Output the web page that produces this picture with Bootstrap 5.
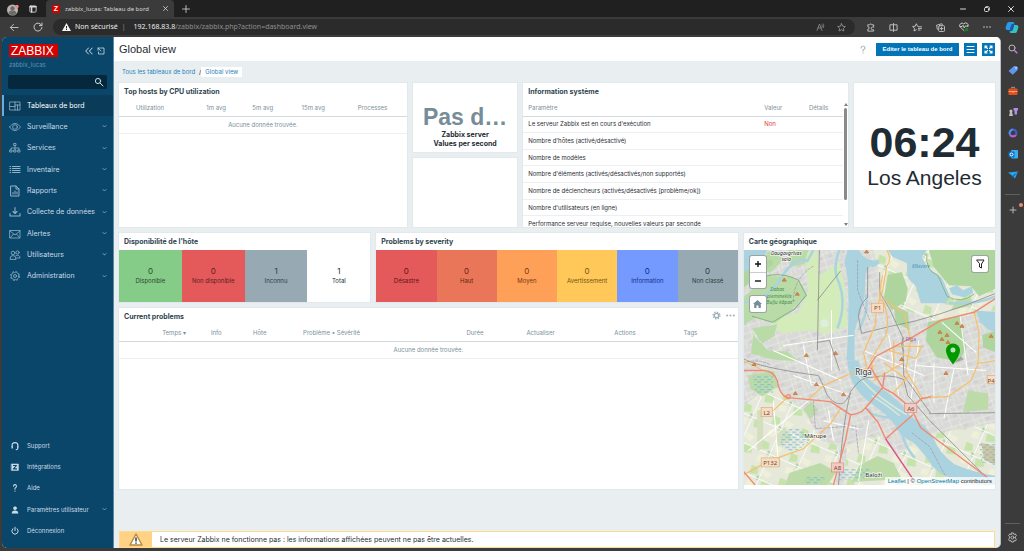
<!DOCTYPE html>
<html lang="fr">
<head>
<meta charset="utf-8">
<meta name="viewport" content="width=device-width, initial-scale=1">
<title>zabbix_lucas: Tableau de bord</title>
<link href="https://cdn.jsdelivr.net/npm/bootstrap@5.3.0/dist/css/bootstrap.min.css" rel="stylesheet">
<style>
  body { background: #3b3b3b; color: #1f2c33; font: 6px/10px Inter, "Liberation Sans", Arial, sans-serif; overflow: hidden; }
  button { font: inherit; color: inherit; background: none; border: 0; padding: 0; display: inline-flex; align-items: center; justify-content: center; }
  a { text-decoration: none; color: #1f7fb8; }
  svg { display: block; flex: none; }
  .ic { fill: none; stroke: currentColor; stroke-width: 1; stroke-linecap: round; stroke-linejoin: round; }
  .chrome-font { font-family: "Noto Sans", sans-serif; }
  .display-font { font-family: "Liberation Sans", Arial, sans-serif; }

  /* browser frame */
  .tabstrip { background: #202020; height: 17px; color: #d8d8d8; }
  .win-start { gap: 10px; padding: 0 9px 0 5px; }
  .win-end { gap: 18px; padding-right: 10px; }
  .tab-active { background: #3b3b3b; width: 128px; border-radius: 4px 4px 0 0; font-size: 6px; padding: 0 6px; gap: 5px; }
  .tab-active .tab-title { width: 86px; white-space: nowrap; }
  .fav { background: #d40000; color: #fff; width: 8px; height: 8px; font: bold 7px/8px "Liberation Sans", Arial, sans-serif; text-align: center; }
  .toolbar { height: 20px; color: #c9c9c9; }
  .nav-tools { gap: 14px; padding: 0 10px 0 9px; }
  .ext-tools { gap: 14px; padding: 0 5px 0 11px; }
  .address { background: #2b2b2b; border-radius: 8px; height: 16px; font-size: 7px; color: #8f8f8f; padding: 0 9px; }
  .address .host { color: #ececec; }
  .edge { width: 23px; flex: none; color: #b8b8b8; }
  .edge-tools { gap: 9px; padding-top: 6px; }
  .edge-tools svg { width: 12px; height: 12px; }
  .edge hr { width: 15px; margin: 0; opacity: 1; border-color: #606060; }
  .dot { position: absolute; right: -4px; top: -1px; width: 4px; height: 4px; border-radius: 50%; background: #ee8a78; }

  .app { min-width: 0; margin: 0 0 3px 2px; border-radius: 5px; overflow: hidden; background: #e9eef1; border-right: 1px solid #b9c1c6; }

  /* sidebar */
  .side { width: 112px; background: #0a466a; color: #c9dbe6; border-right: 1px solid #5f8aa3; }
  .side-top { padding: 7px 8px 0 7px; gap: 4px; }
  .logo { background: #d40000; color: #fff; font-size: 12px; line-height: 12px; padding: 1px 2px 0; height: 13px; width: 49px; }
  .side-host { color: #5f93b2; line-height: 10px; padding: 3px 7px 0; }
  .search { background: #06283d; height: 14px; border: 0; border-radius: 2px; color: #c9dbe6; font-size: 7px; padding: 0 16px 0 4px; box-shadow: none; }
  .search:focus { background: #06283d; color: #fff; }
  .search-box { margin: 5px 6px 6px; }
  .search-ic { position: absolute; right: 3px; top: 2px; }
  .menu { display: grid; grid-auto-rows: 1fr; margin: 0; padding: 0; list-style: none; font-size: 7px; }
  .menu-main { height: 192px; }
  .menu-foot { height: 107px; font-size: 6px; margin-bottom: 6px; }
  .menu a { color: inherit; display: flex; align-items: center; height: 100%; padding: 0 6px 0 5px; border-left: 2px solid transparent; white-space: nowrap; }
  .menu a.on { background: #0a3b59; border-color: #5fb0e6; color: #fff; }
  .menu .mi { width: 12px; height: 12px; margin-right: 6px; color: #8fb3c8; stroke-width: .8; }
  .menu-foot .mi { color: #c9dbe6; }
  .menu .chev { width: 5px; height: 5px; margin-left: auto; color: #8fb3c8; stroke-width: .8; }

  /* page header */
  .pagehead { background: #fff; height: 24px; padding: 0 5px; gap: 5px; }
  .pagehead h1 { font-size: 11px; line-height: 24px; margin: 0; font-weight: 400; }
  .act { background: #0275b8; color: #fff; height: 13px; }
  .act-edit { width: 83px; font-weight: bold; white-space: nowrap; }
  .act-sq { width: 13px; }
  .help { color: #a9b8c0; margin-right: 4px; }
  .crumbs { height: 22px; padding: 0 8px; }
  .crumb-on { background: #fff; padding: 0 4px; }

  /* dashboard */
  .dash { display: grid; grid-template-columns: repeat(24, minmax(0, 1fr)); grid-template-rows: 69px 69px 69px 181px; gap: 6px; padding: 0 5px; }
  .w { background: #fff; overflow: hidden; display: flex; flex-direction: column; position: relative; box-shadow: 0 0 0 1px #e2e8eb; }
  .w h2 { font-size: 7px; line-height: 17px; font-weight: bold; margin: 0; padding: 0 5px; color: #2f4450; height: 17px; flex: none; }
  .w-top { grid-area: 1 / 1 / 3 / 9; }
  .w-item { grid-area: 1 / 9 / 2 / 12; }
  .w-blank { grid-area: 2 / 9 / 3 / 12; }
  .w-info { grid-area: 1 / 12 / 3 / 21; }
  .w-clock { grid-area: 1 / 21 / 3 / 25; }
  .w-avail { grid-area: 3 / 1 / 4 / 8; }
  .w-sev { grid-area: 3 / 8 / 4 / 18; }
  .w-map { grid-area: 3 / 18 / 5 / 25; padding-bottom: 4px; }
  .w-prob { grid-area: 4 / 1 / 5 / 18; }
  .grid-t { width: 100%; table-layout: fixed; border-collapse: collapse; white-space: nowrap; }
  .grid-t th { font-weight: 400; color: #7b8f9a; height: 16px; border-bottom: 1px solid #d3dadd; padding: 0 0 0 9px; }
  .grid-t td { height: 17px; border-bottom: 1px solid #edf0f2; padding: 0 0 0 9px; }
  .grid-t td.none { text-align: center; color: #7b8f9a; padding: 0; }
  .top-t th { padding-left: 17px; }
  .info-t { height: 133px; flex: none; width: calc(100% - 5px); }
  .info-t th, .info-t td { padding-left: 5px; }
  .info-t td { height: auto; }
  .sbar { position: absolute; right: 0; top: 19px; bottom: 0; width: 5px; color: #7f7f7f; }
  .sbar i { display: block; width: 3px; height: 92px; background: #8a8a8a; border-radius: 2px; }
  .item-val { font-size: 23px; line-height: 26px; font-weight: bold; color: #768d99; }
  .item-lbl { font-size: 7px; line-height: 9px; font-weight: bold; }
  .time { font-size: 43px; line-height: 46px; font-weight: bold; color: #1f2c33; }
  .city { font-size: 21px; line-height: 26px; color: #1f2c33; }
  .cell { flex: 1 1 0; text-align: center; padding-bottom: 1px; white-space: nowrap; }
  .cell b { font-weight: 400; font-size: 8px; line-height: 10px; display: block; }
  .c-ok { background: #86cc89; color: #2b4a2d; } .c-dis { background: #e45959; color: #5e1616; }
  .c-unk { background: #97aab3; color: #2c3a42; } .c-high { background: #e97659; color: #662414; }
  .c-avg { background: #ffa059; color: #733a10; } .c-warn { background: #ffc859; color: #735610; }
  .c-inf { background: #7499ff; color: #112f8c; } .c-no { background: #e45959; color: #5b2222; }
  .off { color: #e33734; }
  .w-tools { position: absolute; right: 3px; top: 3px; color: #9fb0ba; gap: 5px; }

  /* map */
  .mapbox { flex: 1; min-height: 0; position: relative; }
  .mapbox > svg { width: 100%; height: 100%; }
  .mctl { position: absolute; background: #fff; border-radius: 2px; box-shadow: 0 0 0 1px #9ba3a5; width: 16px; color: #222; }
  .mctl button { width: 16px; height: 16px; }
  .m-zoom { left: 6px; top: 6px; } .m-home { left: 6px; top: 46px; } .m-filter { right: 7px; top: 6px; }
  .m-zoom button + button { border-top: 1px solid #ccc; }
  .attrib { position: absolute; right: 0; bottom: 0; background: rgba(255,255,255,.75); padding: 0 3px; line-height: 8px; white-space: nowrap; }
  .attrib a { color: #0078a8; }

  .warn { border: 1px solid #ffd98c; background: #fff; height: 17px; margin: 0 5px; font-size: 7px; }
  .warn-ic { background: #ffd383; width: 32px; }
</style>
</head>
<body>
<div class="d-flex flex-column vh-100">
  <header class="chrome-font">
    <div class="tabstrip d-flex align-items-center">
      <div class="win-start d-flex align-items-center">
        <button aria-label="Profil"><svg width="14" height="14" viewBox="0 0 14 14"><circle cx="7.500" cy="8" r="5.500" fill="#b9b6b2"/><circle cx="7.500" cy="6.500" r="2.200" fill="#6f6b68"/><path d="M3.500 11.500a4 3 0 0 1 8 0a5.500 5.500 0 0 1-8 0" fill="#6f6b68"/><circle cx="12" cy="4.500" r="1.700" fill="#f08b7c"/></svg></button>
        <button aria-label="Onglets"><svg class="ic" width="8" height="8" viewBox="0 0 9 9"><rect x="1" y="1" width="7" height="7" rx="1"/><path d="M1 2h7M3 3v5" stroke-width="1.500"/></svg></button>
      </div>
      <div class="tab-active d-flex align-items-center align-self-stretch">
        <span class="fav">Z</span><span class="tab-title">zabbix_lucas: Tableau de bord</span>
        <button class="ms-auto" aria-label="Fermer l'onglet"><svg class="ic" width="5" height="5" viewBox="0 0 5 5"><path d="M.5.5l4 4m0-4l-4 4" stroke-width=".8"/></svg></button>
      </div>
      <button class="ms-2" aria-label="Nouvel onglet"><svg class="ic" width="8" height="8" viewBox="0 0 8 8"><path d="M4 .5v7M.5 4h7" stroke-width=".8"/></svg></button>
      <div class="win-end ms-auto d-flex">
        <button aria-label="Réduire"><svg class="ic" width="6" height="6" viewBox="0 0 6 6"><path d="M.5 3h5"/></svg></button>
        <button aria-label="Restaurer"><svg class="ic" width="6" height="6" viewBox="0 0 6 6"><rect x=".5" y="1.500" width="4" height="4" rx="1"/><path d="M2 .5h2.500l1 1V4" stroke-width=".8"/></svg></button>
        <button aria-label="Fermer"><svg class="ic" width="6" height="6" viewBox="0 0 6 6"><path d="M.5.5l5 5m0-5l-5 5"/></svg></button>
      </div>
    </div>
    <div class="toolbar d-flex align-items-center">
      <div class="nav-tools d-flex align-items-center">
        <button aria-label="Retour"><svg class="ic" width="10" height="9" viewBox="0 0 11 9"><path d="M10 4.500H2M5 1L1.500 4.500 5 8"/></svg></button>
        <button aria-label="Actualiser"><svg class="ic" width="10" height="10" viewBox="0 0 10 10"><path d="M8.700 3.500A4 4 0 1 0 9 5.500M9 1v2.600H6.400"/></svg></button>
      </div>
      <div class="address d-flex align-items-center flex-grow-1">
        <svg width="9" height="8" viewBox="0 0 9 8"><path d="M4.500 0L9 8H0z" fill="#f2f2f2"/><path d="M4.500 3v2.500M4.500 6v1" stroke="#2b2b2b"/></svg>
        <span class="ms-1 host">Non sécurisé</span>
        <span class="mx-1">|</span>
        <span class="text-nowrap ps-1"><span class="host">192.168.83.8</span>/zabbix/zabbix.php?action=dashboard.view</span>
        <button class="ms-auto me-2" aria-label="Lecture à voix haute"><svg class="ic" width="9" height="8" viewBox="0 0 9 8"><path d="M1 7.500L3.500 1 6 7.500M2 5h3M6 2q1 .7 0 2M7 .8q1.800 1.700.3 4" stroke-width=".8"/></svg></button>
        <button class="ms-1" aria-label="Favori"><svg class="ic" width="9" height="9" viewBox="0 0 10 10"><path d="M5 .8l1.300 2.700 3 .4-2.200 2 .6 3L5 7.500 2.300 8.900l.6-3-2.200-2 3-.4z"/></svg></button>
      </div>
      <div class="ext-tools d-flex align-items-center">
        <button aria-label="Extensions"><svg class="ic" width="9" height="9" viewBox="0 0 10 10"><path d="M8.500 3.500V2h-2a1.300 1.300 0 0 0-2.500 0H2v2a1.300 1.300 0 1 1 0 3v2h6.500V7.500H7.300a1.300 1.300 0 1 1 0-3h1.200z"/></svg></button>
        <button aria-label="Écran partagé"><svg class="ic" width="9" height="9" viewBox="0 0 10 10"><path d="M4 2H1v6h3M6 2h3v6H6M5 .5v9"/></svg></button>
        <button aria-label="Favoris"><svg class="ic" width="10" height="9" viewBox="0 0 11 10"><path d="M6 3.500L4.800.8 3.600 3.500l-3 .4 2.200 2-.6 3L4.800 7.500M7 4.200h3.500M7 6h3.500M7 7.800h2"/></svg></button>
        <button aria-label="Collections"><svg class="ic" width="9" height="9" viewBox="0 0 10 10"><rect x="3" y="3" width="6.500" height="6.500" rx="1"/><path d="M1.500 7L.6 2.500 6.500.8l.5 1M6.200 4.700v3M4.700 6.200h3"/></svg></button>
        <button aria-label="Performances"><svg class="ic" width="10" height="10" viewBox="0 0 10 10"><path d="M5 8.500L1.200 5a2.200 2.200 0 0 1 3.600-3 2.200 2.200 0 0 1 4 2.500M1 4.500h2l1-1.200 1.200 2.500L6.300 4H9"/><circle cx="7.500" cy="7.500" r="1.800" fill="#14801e" stroke="none"/></svg></button>
        <button aria-label="Plus"><svg width="8" height="2" viewBox="0 0 8 2" fill="currentColor"><circle cx="1" cy="1" r=".8"/><circle cx="4" cy="1" r=".8"/><circle cx="7" cy="1" r=".8"/></svg></button>
        <button aria-label="Copilot"><svg width="14" height="13" viewBox="0 0 14 13"><path d="M4 1h4q1 0 1.500 1.500L8 3Q6.500 3 6 5L5 9H2.500Q0 9 .8 6L2 2.500Q2.500 1 4 1z" fill="#2a9be8"/><path d="M10 12H6q-1 0-1.500-1.500L6 10q1.500 0 2-2l1-4h2.500q2.500 0 1.700 3L12 10.500q-.5 1.500-2 1.500z" fill="#35c3c0"/><path d="M5 9l1-4q.5-2 2-2l1.500-.5.8 1.500H9L8 8q-.5 2-2 2l-1.500.5L3.800 9z" fill="#1c56b0"/></svg></button>
      </div>
    </div>
  </header>

  <div class="d-flex flex-grow-1" style="min-height:0">
    <div class="app d-flex flex-grow-1">
      <nav class="side d-flex flex-column flex-shrink-0" aria-label="Menu principal">
        <div class="side-top d-flex align-items-center">
          <span class="logo display-font">ZABBIX</span>
          <button class="ms-auto" aria-label="Réduire le menu"><svg class="ic" width="8" height="8" viewBox="0 0 8 8"><path d="M3.500 1L.7 4l2.800 3M7.200 1L4.400 4l2.800 3"/></svg></button>
          <button aria-label="Masquer le menu"><svg class="ic" width="8" height="8" viewBox="0 0 8 8"><path d="M4 1h3v6H1.500V5M1 3.200V1h2M1 1l3 3" stroke-width=".8"/></svg></button>
        </div>
        <div class="side-host">zabbix_lucas</div>
        <form class="search-box position-relative" role="search" onsubmit="return false">
          <input class="search form-control" type="text" aria-label="Rechercher">
          <svg class="ic search-ic" width="10" height="10" viewBox="0 0 10 10"><circle cx="4" cy="4" r="2.600"/><path d="M6 6l3 3"/></svg>
        </form>
        <ul class="menu menu-main">
          <li><a class="on" href="#"><svg class="ic mi" viewBox="0 0 12 12"><path d="M1 2h10v8H1zM6 2v8M1 6.500h5M6 5h5M8.500 5v5"/></svg>Tableaux de bord</a></li>
          <li><a href="#"><svg class="ic mi" viewBox="0 0 12 12"><path d="M.5 6Q6-1.500 11.500 6 6 13.500.5 6z"/><circle cx="6" cy="6" r="2.300"/></svg>Surveillance<svg class="ic chev" viewBox="0 0 5 5"><path d="M1 1.500l1.500 1.500L4 1.500"/></svg></a></li>
          <li><a href="#"><svg class="ic mi" viewBox="0 0 12 12"><path d="M5 1.500h2v2H5zM1 8h2v2H1zM5 8h2v2H5zM9 8h2v2H9zM6 3.500V8M2 8V6h8v2"/></svg>Services<svg class="ic chev" viewBox="0 0 5 5"><path d="M1 1.500l1.500 1.500L4 1.500"/></svg></a></li>
          <li><a href="#"><svg class="ic mi" viewBox="0 0 12 12"><path d="M3.500 2.500H11M3.500 4.500H11M3.500 6.500H11M3.500 8.500H11M1 2.500h.6M1 4.500h.6M1 6.500h.6M1 8.500h.6" stroke-width="1.200"/></svg>Inventaire<svg class="ic chev" viewBox="0 0 5 5"><path d="M1 1.500l1.500 1.500L4 1.500"/></svg></a></li>
          <li><a href="#"><svg class="ic mi" viewBox="0 0 12 12"><path d="M2 1h5l3 3v7H2zM7 1v3h3M4 9V7.500M6 9V6M8 9V7" stroke-width="1"/></svg>Rapports<svg class="ic chev" viewBox="0 0 5 5"><path d="M1 1.500l1.500 1.500L4 1.500"/></svg></a></li>
          <li><a href="#"><svg class="ic mi" viewBox="0 0 12 12"><path d="M1 7.500V10h10V7.500M6 1.500v6M4 5.500l2 2 2-2" stroke-width="1.100"/></svg>Collecte de données<svg class="ic chev" viewBox="0 0 5 5"><path d="M1 1.500l1.500 1.500L4 1.500"/></svg></a></li>
          <li><a href="#"><svg class="ic mi" viewBox="0 0 12 12"><path d="M1 2.500h10v7.500H1zM1 3l5 4 5-4M1.500 9.500L4.500 6M10.500 9.500l-3-3.500"/></svg>Alertes<svg class="ic chev" viewBox="0 0 5 5"><path d="M1 1.500l1.500 1.500L4 1.500"/></svg></a></li>
          <li><a href="#"><svg class="ic mi" viewBox="0 0 12 12"><circle cx="4" cy="4" r="1.800"/><circle cx="8.500" cy="3.500" r="1.600"/><path d="M1 10q0-3.500 3-3.500T7 10zM7 6.500q3.500-1.500 4 2.500H7.500"/></svg>Utilisateurs<svg class="ic chev" viewBox="0 0 5 5"><path d="M1 1.500l1.500 1.500L4 1.500"/></svg></a></li>
          <li><a href="#"><svg class="ic mi" viewBox="0 0 12 12"><circle cx="6" cy="6" r="4.500" stroke-dasharray="2 1.530" stroke-linecap="butt"/><circle cx="6" cy="6" r="3.700" stroke-width=".6"/><circle cx="6" cy="6" r="1.500"/></svg>Administration<svg class="ic chev" viewBox="0 0 5 5"><path d="M1 1.500l1.500 1.500L4 1.500"/></svg></a></li>
        </ul>
        <ul class="menu menu-foot mt-auto">
          <li><a href="#"><svg class="ic mi" viewBox="-2 -2 16 16"><path d="M2 8.500V5.500a4 4 0 0 1 8 0v3q0 2-2.500 2.500M2.500 5.500v3M9.500 5.500v3" stroke-width="1.400"/></svg>Support</a></li>
          <li><a href="#"><svg class="ic mi" viewBox="-2 -2 16 16"><rect x="1.500" y="2" width="9" height="8.500" fill="currentColor"/><path d="M4 4h4L4 8.500h4" stroke="#0a466a" stroke-width="1.500"/></svg>Intégrations</a></li>
          <li><a href="#"><svg class="ic mi" viewBox="-2 -2 16 16"><path d="M4 3.500Q4.300 1.500 6 1.500T8 3.700Q8 5 6 6.200v1.300M6 10v.3" stroke-width="1.400"/></svg>Aide</a></li>
          <li><a href="#"><svg class="ic mi" viewBox="-2 -2 16 16"><g fill="currentColor"><circle cx="6" cy="3.500" r="2"/><path d="M2 10q0-3 4-3t4 3z"/></g></svg>Paramètres utilisateur<svg class="ic chev" viewBox="0 0 5 5"><path d="M1 1.500l1.500 1.500L4 1.500"/></svg></a></li>
          <li><a href="#"><svg class="ic mi" viewBox="-2 -2 16 16"><path d="M3 3a4.200 4.200 0 1 0 6 0M6 1v4.500" stroke-width="1.300"/></svg>Déconnexion</a></li>
        </ul>
      </nav>

      <main class="d-flex flex-column flex-grow-1" style="min-width:0">
        <div class="pagehead d-flex align-items-center">
          <h1 class="display-font">Global view</h1>
          <button class="help ms-auto" aria-label="Aide"><svg class="ic" width="8" height="9" viewBox="0 0 8 9"><path d="M2 3Q2.200 1 4 1t2 2Q6 4 4 5v1.200M4 8v.2" stroke-width="1.200"/></svg></button>
          <button class="act act-edit display-font">Editer le tableau de bord</button>
          <button class="act act-sq" aria-label="Actions"><svg class="ic" width="9" height="9" viewBox="0 0 9 9"><path d="M1 1.500h7M1 4.500h7M1 7.500h7"/></svg></button>
          <button class="act act-sq" aria-label="Plein écran"><svg class="ic" width="9" height="9" viewBox="0 0 9 9"><path d="M1 3V1h2M6 1h2v2M8 6v2H6M3 8H1V6M1 1l2.500 2.500M8 1L5.500 3.500M8 8L5.500 5.500M1 8l2.500-2.500" stroke-width="1.100"/></svg></button>
        </div>
        <div class="crumbs d-flex align-items-center">
          <a href="#">Tous les tableaux de bord</a><span class="ms-1">/</span><a class="crumb-on" href="#">Global view</a>
        </div>

        <div class="dash">
          <section class="w w-top">
            <h2>Top hosts by CPU utilization</h2>
            <table class="grid-t top-t">
              <colgroup><col style="width:24.400%"><col style="width:16%"><col style="width:17.100%"><col style="width:19.500%"><col style="width:23%"></colgroup>
              <thead><tr><th>Utilization</th><th>1m avg</th><th>5m avg</th><th>15m avg</th><th>Processes</th></tr></thead>
              <tbody><tr><td class="none" colspan="5">Aucune donnée trouvée.</td></tr></tbody>
            </table>
          </section>

          <section class="w w-item text-center justify-content-end pb-1">
            <div class="item-val display-font">Pas d…</div>
            <div class="item-lbl">Zabbix server<br>Values per second</div>
          </section>
          <section class="w w-blank"></section>

          <section class="w w-info">
            <h2>Information système</h2>
            <table class="grid-t info-t">
              <colgroup><col style="width:73.800%"><col style="width:14%"><col style="width:12.200%"></colgroup>
              <thead><tr><th>Paramètre</th><th>Valeur</th><th>Détails</th></tr></thead>
              <tbody>
                <tr><td>Le serveur Zabbix est en cours d'exécution</td><td class="off">Non</td><td></td></tr>
                <tr><td>Nombre d'hôtes (activé/désactivé)</td><td></td><td></td></tr>
                <tr><td>Nombre de modèles</td><td></td><td></td></tr>
                <tr><td>Nombre d'éléments (activés/désactivés/non supportés)</td><td></td><td></td></tr>
                <tr><td>Nombre de déclencheurs (activés/désactivés [problème/ok])</td><td></td><td></td></tr>
                <tr><td>Nombre d'utilisateurs (en ligne)</td><td></td><td></td></tr>
                <tr><td>Performance serveur requise, nouvelles valeurs par seconde</td><td></td><td></td></tr>
              </tbody>
            </table>
            <div class="sbar d-flex flex-column align-items-center">
              <svg width="4" height="6" viewBox="0 0 4 6"><path d="M2 1l2 3H0z" fill="currentColor"/></svg><i></i>
              <svg class="mt-auto" width="4" height="6" viewBox="0 0 4 6"><path d="M2 5L0 2h4z" fill="currentColor"/></svg>
            </div>
          </section>

          <section class="w w-clock display-font text-center justify-content-center">
            <div class="time">06:24</div><div class="city">Los Angeles</div>
          </section>

          <section class="w w-avail">
            <h2>Disponibilité de l'hôte</h2>
            <div class="d-flex flex-grow-1">
              <div class="cell c-ok d-flex flex-column justify-content-center"><b>0</b>Disponible</div>
              <div class="cell c-no d-flex flex-column justify-content-center"><b>0</b>Non disponible</div>
              <div class="cell c-unk d-flex flex-column justify-content-center"><b>1</b>Inconnu</div>
              <div class="cell d-flex flex-column justify-content-center"><b>1</b>Total</div>
            </div>
          </section>

          <section class="w w-sev">
            <h2>Problems by severity</h2>
            <div class="d-flex flex-grow-1">
              <div class="cell c-dis d-flex flex-column justify-content-center"><b>0</b>Désastre</div>
              <div class="cell c-high d-flex flex-column justify-content-center"><b>0</b>Haut</div>
              <div class="cell c-avg d-flex flex-column justify-content-center"><b>0</b>Moyen</div>
              <div class="cell c-warn d-flex flex-column justify-content-center"><b>0</b>Avertissement</div>
              <div class="cell c-inf d-flex flex-column justify-content-center"><b>0</b>Information</div>
              <div class="cell c-unk d-flex flex-column justify-content-center"><b>0</b>Non classé</div>
            </div>
          </section>

          <section class="w w-map">
            <h2>Carte géographique</h2>
            <div class="mapbox">
              <svg viewBox="0 0 252 234" preserveAspectRatio="xMidYMid slice" role="img" aria-label="Rīga">
                <defs>
                  <pattern id="streets" width="23" height="19" patternUnits="userSpaceOnUse" patternTransform="rotate(-18)">
                    <path d="M0 4h23M0 11l10-2 13 2M5 0v19M14 0l2 19M9 4v7M20 11v8M0 16h14" stroke="#fff" stroke-width=".6" fill="none" opacity=".55"/>
                    <path d="M6 5h3v3H6zM16 13h3v2h-3z" fill="#d3e6c5"/><path d="M10 12h3v3h-3zM17 5h4v3h-4zM1 12h3v3H1z" fill="#cfccca" opacity=".6"/>
                  </pattern>
                  <pattern id="fields" width="31" height="27" patternUnits="userSpaceOnUse" patternTransform="rotate(24)">
                    <path d="M2 3h7l2 6-8 3zM17 14l8-2 3 7-9 3z" fill="#c5e3ab"/><path d="M15 2l9 1-2 6-6-1zM3 18l7-2 1 7-7 1z" fill="#eef0d8"/><path d="M11 10l4 1-1 4-3-1z" fill="#acd19d"/><path d="M0 13h31M14 0v27" stroke="#fff" stroke-width=".8"/>
                  </pattern>
                  <pattern id="marsh" width="7" height="5" patternUnits="userSpaceOnUse"><path d="M0 1.500h4M3 4h4" stroke="#69b1db" stroke-width=".8"/></pattern>
                </defs>
                <rect width="252" height="234" fill="#d9d9d7"/>
                <rect width="252" height="234" fill="url(#streets)"/>
                <path d="M0 155L30 135 60 160 78 190 96 195 92 234H0zM100 234l4-40 30-10 20 20 30-20 68-12v62zM130 0h122v60l-60 12-50-20z" fill="#e6e8da"/>
                <path d="M0 155L30 135 60 160 78 190 96 195 92 234H0zM100 234l4-40 30-10 20 20 30-20 68-12v62zM130 0h122v60l-60 12-50-20z" fill="url(#fields)"/>
                <path d="M62 2h13v24L96 12l5 24 3 40-22 8-12-4-33 3-7-13 25-8 10-20z" fill="#d3ecba"/>
                <circle cx="81" cy="73" r="4" fill="#dfeee0"/>
                <path d="M0 47l24-21 24 1 11 8 3 10-13 14-17 14-19-6-13 8zM24 2h12l3 9-12 12-8-3zM45 0h20l-4 14-14 3zM9 78l25-4-3 12-12 7zM10 85l15 15 19 1 12 10-26-2-22-6z" fill="#b9dba8"/>
                <path d="M0 20l28-11 2 5L0 38zM0 63l14-5M144 25l14-3 6 16-2 13-14 9-8-12zM185 0h67v38l-17 8-8-10-22-1-15-18zM150 55l14 7 2 18-14-8zM184 72l32-7 6 33-7 13-22-4-11-17zM238 85l14-5v22l-13-5z" fill="#afd59f"/>
                <path d="M134 205l16 7 8 16-50 3 8-17zM46 222l31-10 16 9-9 13H42zM224 140l20 3v16l-25 2zM212 50l16-2-3 8-18 4zM60 158l8-7 7 8-8 10zM5 125l26-5 4 16-16 10-12-8z" fill="#bcdba9"/>
                <path d="M14 160l6-2v40l-6 2zM32 185l10-9 4 13-11 7z" fill="#d5dfbf"/>
                <path d="M40 182q14-10 22 2 2 14-12 16-18 0-10-18zM10 125h20v18H12zM235 193h17v22l-15-4zM96 218h30l-6 9-25 2zM64 226h20l-8 7H60z" fill="url(#marsh)"/>
                <path d="M237 192l15 4v18l-12-5z" fill="#b4a875" opacity=".5"/>
                <!-- water -->
                <g fill="#aad3df">
                  <path d="M144 0h39l-5 7 6 11 14 10 8 18-4 7h-25l-5-17-8-8-1-15-14-6z"/>
                  <path d="M205 38l8-3 6 5 9-4 1 7-9 4-12-3z"/>
                  <path d="M232 60l20 2v20l-8-3-8-7z"/>
                  <path d="M0 0h24l-6 14-18 8z"/>
                  <path d="M104 0h11q5 8 9 9 8 3 10 0l2 4q-6 6-9 3-4 2-5 10l-1 20q-3 15-10 34v30h-8q2-28 2-60 0-25-4-38z"/>
                  <path d="M104 110h11q2 14 15 23 28 17 36 32 17 10 23 21 6 16 21 27 18 8 42 12v9q-48-2-62-17-12-17-20-25-15-7-19-18-6-9-27-24-19-15-20-40z"/>
                </g>
                <path d="M0 52q25-2 38-24T64 11l6-11M96 0q-8 18 0 34 7 20-2 44M122 44q4 16-7 36M125 158q0 8 26 9M157 165q-2 24 14 42M205 53q28 2 47-7" fill="none" stroke="#aad3df" stroke-width="2.500"/>
                <path d="M112 121q15 22 51 43M128 145q15 9 28 20" fill="none" stroke="#dbe8d8" stroke-width="1.500"/>
                <path d="M183 3q-2 18 11 22 5 12 9 21 14 8 27-2" fill="none" stroke="#7aae77" stroke-width=".8"/>
                <path d="M23 26q16-4 32 4l8 15-12 14-22 13-20-6" fill="none" stroke="#7fb87b"/>
                <path d="M0 112q18-4 28 3M70 150l2 28 40-3 3 28M168 182l18 14 16 30M114 10v30l12 30M70 16q-20 12-20 36" fill="none" stroke="#a394ad" stroke-width=".7" stroke-dasharray="3 1"/>
                <!-- local streets -->
                <path d="M40 95l70-10M30 100l68 30M88 60v60M60 95l8 40M50 125l58 20M120 100l60 25M145 85l10 60M175 90l-8 60M172 115l70 5M190 112v40M210 118l-10 50M115 178l-35-8M85 160l5 30M125 170l-10 60M198 72l34 30M216 65l8 60M30 150l5 60M5 200l60-50" fill="none" stroke="#fff" stroke-width="1"/>
                <!-- railways -->
                <path d="M76 0l-2 100M74 50L97 21M0 108q15 9 75 17 5 10 9 20 7 9 13 8 6 0 10-12 11-16 20-14 20-4 33 2l4 16 23 26 60 60M124 17v30q-9 8-9 20l3 16 29-7q45-8 105-33M136 22v20l10 17 13 28 1 38M160 87q-4 8 0 14M185 163l67-1M160 125l27 38M74 92l12-2 10 30M107 142q-8 30-12 92" fill="none" stroke="#8b8b8b" stroke-width=".8"/>
                <!-- secondary roads -->
                <path d="M143 0q6 10 0 16l-4 24q-8 20-7 34l-12 28 3 15M139 48l21 15 7 27-5 30M139 25q-6 28 0 25 8 20 3 35l-15 25 5 20M230 62l5 20-1 31-7 17-23 16-25 1M30 160l15-14M0 224l26-14 34-12 27-25 10-15M64 150l16-15 27-12 25-8M162 120l16 27M234 113l18-3M145 100l27 8 6-12H150M150 90v30M130 130l30-18M0 110l20 10M140 112l24 18M150 142l16-18" fill="none" stroke="#f7bf6b" stroke-width="1.200"/>
                <!-- main roads -->
                <path d="M0 120h20q10 0 14 10 3 16 11 17l42 4 20 13q10 0 15-7l17-20 11 6 17 14 10 20 67 50M122 157l12 14 8 17M142 188l27-24M107 164l-5 25-12 45M122 122l10-16 38-20 27-16 33-8 22-14M127 117l12 20 2-15M179 148l8-2M0 220l12 14M167 157l12-10" fill="none" stroke="#f08a70" stroke-width="1.400"/>
                <path d="M142 188l27 40" fill="none" stroke="#dc4f7c" stroke-width="1.400"/>
                <circle cx="45" cy="146" r="2" fill="none" stroke="#f08a70" stroke-width="1.400"/>
                <path d="M123 0l2 3h-4zM41 28l2 3h-4zM54 42l2 3h-4zM63 103l2 3h-4zM92 101l2 3h-4zM11 112l2 3h-4zM73 132l2 3h-4zM52 141l2 3h-4zM100 142l2 3h-4zM158 107l2 3h-4zM213 71l2 3h-4zM218 74l2 3h-4zM196 80l2 3h-4zM203 83l2 3h-4zM198 87l2 3h-4zM204 90l2 3h-4zM247 84l2 3h-4zM202 121l2 3h-4z" fill="#d08f55" stroke="#c77438" stroke-width=".8"/>
                <!-- road shields -->
                <g stroke="#dba57a" stroke-width=".6" fill="#f8dcbf"><rect x="128" y="53" width="12" height="9"/><rect x="18" y="157" width="11" height="9"/><rect x="18" y="207" width="18" height="9"/><rect x="243" y="125" width="9" height="8"/></g>
                <g stroke="#d9857a" stroke-width=".6" fill="#f5cbc1"><rect x="161" y="153" width="12" height="9"/><rect x="88" y="212" width="12" height="9"/></g>
                <g font-family="Noto Sans, sans-serif" font-size="6" text-anchor="middle" fill="#6b4634"><text x="134" y="60">P1</text><text x="23.500" y="164">L2</text><text x="27" y="214">P132</text><text x="247" y="132">P4</text><text x="167" y="160">A6</text><text x="94" y="219">A8</text></g>
                <g font-family="Noto Sans, sans-serif" text-anchor="middle" fill="#333" stroke="#fff" stroke-width="1.500" paint-order="stroke" stroke-opacity=".7">
                  <text x="120" y="124" font-size="8">Rīga</text><text x="72" y="187" font-size="6">Mārupe</text><text x="130" y="226" font-size="6">Baloži</text>
                  <g font-size="5" font-style="italic"><text x="43" y="5">Daugavgrīvas</text><text x="43" y="11">sala</text></g>
                </g>
                <g font-family="Noto Sans, sans-serif" font-size="5" font-style="italic" text-anchor="middle" fill="#42904b"><text x="34" y="41">Dabas</text><text x="36" y="48">piemineklis</text><text x="36" y="54">“Buļļu kāpas”</text></g>
                <text x="177" y="18" font-family="Noto Sans, sans-serif" font-size="5" font-style="italic" text-anchor="middle" fill="#5590b8">Ķīšezers</text>
                <text x="167" y="91" font-family="Noto Sans, sans-serif" font-size="5" text-anchor="middle" fill="#95609b">Rīga</text>
                <!-- host marker -->
                <path d="M209 113l8-7 3 3z" fill="#555" opacity=".35"/>
                <path d="M209 114q-7-9-7-14a7 7 0 0 1 14 0q0 5-7 14z" fill="#009900"/><circle cx="209" cy="99.500" r="2.500" fill="#b9e2b9"/>
              </svg>
              <div class="mctl m-zoom d-flex flex-column">
                <button aria-label="Zoom avant"><svg width="8" height="8" viewBox="0 0 8 8"><path d="M4 1v6M1 4h6" stroke="#111" stroke-width="1.400"/></svg></button>
                <button aria-label="Zoom arrière"><svg width="8" height="8" viewBox="0 0 8 8"><path d="M1 4h6" stroke="#111" stroke-width="1.400"/></svg></button>
              </div>
              <div class="mctl m-home"><button aria-label="Vue initiale"><svg width="9" height="8" viewBox="0 0 9 8"><path d="M4.500 0L9 4H7.800v4H5.500V5.500h-2V8H1.200V4H0z" fill="#768d99"/></svg></button></div>
              <div class="mctl m-filter"><button aria-label="Filtre"><svg class="ic" width="9" height="10" viewBox="0 0 9 10"><path d="M1 1h7L5.500 5v4l-2-1V5z"/></svg></button></div>
              <div class="attrib display-font"><a href="#">Leaflet</a> | © <a href="#">OpenStreetMap</a> contributors</div>
            </div>
          </section>

          <section class="w w-prob">
            <h2>Current problems</h2>
            <div class="w-tools d-flex align-items-center">
              <button aria-label="Modifier"><svg class="ic" width="9" height="9" viewBox="0 0 9 9"><circle cx="4.500" cy="4.500" r="3.300" stroke-width="1.600" stroke-dasharray="1.300 1.292" stroke-linecap="butt"/><circle cx="4.500" cy="4.500" r="2.200" stroke-width="1.300"/></svg></button>
              <button aria-label="Actions"><svg width="9" height="3" viewBox="0 0 9 3" fill="currentColor"><circle cx="1.200" cy="1.500" r="1"/><circle cx="4.500" cy="1.500" r="1"/><circle cx="7.800" cy="1.500" r="1"/></svg></button>
            </div>
            <table class="grid-t">
              <colgroup><col style="width:13.400%"><col style="width:6.800%"><col style="width:8.100%"><col style="width:26.400%"><col style="width:9.700%"><col style="width:14.200%"><col style="width:11.200%"><col style="width:10.200%"></colgroup>
              <thead><tr><th class="text-end pe-3">Temps ▾</th><th>Info</th><th>Hôte</th><th>Problème • Sévérité</th><th>Durée</th><th>Actualiser</th><th>Actions</th><th>Tags</th></tr></thead>
              <tbody><tr><td class="none" colspan="8">Aucune donnée trouvée.</td></tr></tbody>
            </table>
          </section>
        </div>

        <div class="warn d-flex align-items-center mt-auto" role="alert">
          <span class="warn-ic d-flex align-items-center justify-content-center align-self-stretch me-2"><svg width="14" height="13" viewBox="0 0 14 13"><path d="M7 1l6 11H1z" fill="#fff" stroke="#b58b45" stroke-width="1.500" stroke-linejoin="round"/><path d="M7 4.500v4M7 9.500v1.300" stroke="#1f2c33" stroke-width="1.400"/></svg></span>
          Le serveur Zabbix ne fonctionne pas : les informations affichées peuvent ne pas être actuelles.
        </div>
      </main>
    </div>

    <aside class="edge d-flex flex-column align-items-center" aria-label="Barre latérale">
      <div class="edge-tools d-flex flex-column align-items-center">
        <button aria-label="Rechercher"><svg class="ic" viewBox="0 0 12 12"><circle cx="5" cy="5" r="3"/><path d="M7.300 7.300l2.500 2.500" stroke="#b57be0" stroke-width="1.600"/></svg></button>
        <button aria-label="Shopping"><svg viewBox="0 0 12 12"><path d="M7 2l4 .3-.3 3.700-5 4.700L1.500 7z" fill="#5f96ea"/><circle cx="9" cy="4" r=".8" fill="#fff"/></svg></button>
        <button aria-label="Outils"><svg viewBox="0 0 12 12"><path d="M4.500 3.500V2.300h3v1.200" stroke="#9e9e9e" fill="none"/><rect x="1.500" y="3.500" width="9" height="6.500" rx="1" fill="#e0501c"/><path d="M1.500 6.500h9M6 6v2" stroke="#ffb18a" stroke-width=".8"/></svg></button>
        <button aria-label="Jeux"><svg viewBox="0 0 12 12"><circle cx="4" cy="5" r="1.600" fill="#bdbdbd"/><path d="M3 6h2l1 4H2z" fill="#bdbdbd"/><path d="M6.500 2h4.500v2l-1 1v3.500H7.500V5l-1-1z" fill="#b48be8"/></svg></button>
        <button aria-label="Microsoft 365"><svg viewBox="0 0 12 12" fill="none" stroke-width="2.200"><path d="M6 2.700a3.300 3.300 0 0 0-2.900 5" stroke="#4a8cf0"/><path d="M3.100 7.700a3.300 3.300 0 0 0 5.800 0" stroke="#b55fdc"/><path d="M8.900 7.700A3.300 3.300 0 0 0 6 2.700" stroke="#3f5fc8"/></svg></button>
        <button aria-label="Outlook"><svg viewBox="0 0 12 12"><rect x="4" y="2" width="7" height="8.500" rx="1" fill="#39b0f0"/><rect x="1.500" y="3.500" width="6" height="6" rx="1" fill="#0b6cc4"/><circle cx="4.500" cy="6.500" r="1.500" fill="none" stroke="#fff"/></svg></button>
        <button aria-label="Drop"><svg viewBox="0 0 12 12"><path d="M1 3.500L11 2.500 8 9.500 5.500 7z" fill="#2aa4ee"/><path d="M11 2.500L5.500 7v2z" fill="#0b63b5"/></svg></button>
        <hr class="mt-1">
        <button class="position-relative" aria-label="Personnaliser"><svg class="ic" viewBox="0 0 12 12"><path d="M6 3v6M3 6h6"/></svg><span class="dot"></span></button>
      </div>
      <div class="mt-auto d-flex flex-column align-items-center gap-2 pb-1 mb-1">
        <hr>
        <button aria-label="Paramètres"><svg class="ic" width="11" height="11" viewBox="0 0 11 11"><path d="M4.500 1h2l.4 1.400 1.500-.4 1 1.700-1 1.100v1.400l1 1.100-1 1.700-1.500-.4L6.500 10h-2l-.4-1.400-1.500.4-1-1.700 1-1.100V4.800l-1-1.100 1-1.700 1.500.4z"/><circle cx="5.500" cy="5.500" r="1.500"/></svg></button>
      </div>
    </aside>
  </div>
</div>
<script src="https://cdn.jsdelivr.net/npm/bootstrap@5.3.0/dist/js/bootstrap.bundle.min.js"></script>
</body>
</html>
